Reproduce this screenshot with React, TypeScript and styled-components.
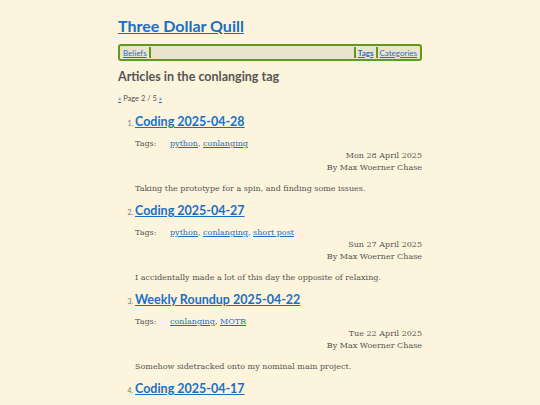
import React, { FC } from "react";
import styled, { createGlobalStyle } from "styled-components";

type Article = {
  title: string;
  tags: string[];
  date: string;
  summary: string;
};

const articles: Article[] = [
  {
    title: "Coding 2025-04-28",
    tags: ["python", "conlanging"],
    date: "Mon 28 April 2025",
    summary: "Taking the prototype for a spin, and finding some issues.",
  },
  {
    title: "Coding 2025-04-27",
    tags: ["python", "conlanging", "short post"],
    date: "Sun 27 April 2025",
    summary: "I accidentally made a lot of this day the opposite of relaxing.",
  },
  {
    title: "Weekly Roundup 2025-04-22",
    tags: ["conlanging", "MOTR"],
    date: "Tue 22 April 2025",
    summary: "Somehow sidetracked onto my nominal main project.",
  },
  {
    title: "Coding 2025-04-17",
    tags: ["python", "conlanging"],
    date: "Thu 17 April 2025",
    summary: "Getting things in order.",
  },
];

const App: FC = () => (
  <>
    <GlobalStyle />
    <Page>
      <SiteTitle>
        <a href="#">Three Dollar Quill</a>
      </SiteTitle>
      <Nav>
        <NavLink href="#">Beliefs</NavLink>
        <Sep />
        <Spacer />
        <Sep />
        <NavLink href="#" $active>
          Tags
        </NavLink>
        <Sep />
        <NavLink href="#">Categories</NavLink>
      </Nav>
      <Heading>Articles in the conlanging tag</Heading>
      <Pager>
        <a href="#">«</a> Page 2 / 5 <a href="#">»</a>
      </Pager>
      <List>
        {articles.map((a) => (
          <Item key={a.title}>
            <ItemTitle>
              <a href="#">{a.title}</a>
            </ItemTitle>
            <TagRow>
              <TagLabel>Tags:</TagLabel>
              <span>
                {a.tags.map((t, i) => (
                  <React.Fragment key={t}>
                    {i > 0 && ", "}
                    <TagLink href="#">{t}</TagLink>
                  </React.Fragment>
                ))}
              </span>
            </TagRow>
            <Meta>
              <div>{a.date}</div>
              <div>By Max Woerner Chase</div>
            </Meta>
            <Summary>{a.summary}</Summary>
          </Item>
        ))}
      </List>
    </Page>
  </>
);

export default App;

const GlobalStyle = createGlobalStyle`
  body {
    margin: 0;
    background: #fcf4dc;
    color: #555;
    font-family: "DejaVu Serif", serif;
  }
`;

const Page = styled.div`
  width: 304px;
  margin: 0 auto;
  padding-top: 15px;
`;

const SiteTitle = styled.h1`
  margin: 0;
  font-family: Lato, sans-serif;
  font-size: 16px;
  line-height: 22px;
  font-weight: 700;
  a {
    color: #1a6fc4;
    text-decoration: underline;
  }
`;

const Nav = styled.nav`
  display: flex;
  align-items: center;
  margin-top: 7px;
  height: 13px;
  padding: 0 2px;
  border: 2px solid #5f9a1e;
  border-radius: 3px;
  background: #ece3cc;
  font-family: Lato, sans-serif;
  font-size: 8px;
`;

const NavLink = styled.a<{ $active?: boolean }>`
  color: #2a72c0;
  font-weight: ${(p) => (p.$active ? 700 : 400)};
  text-decoration: underline;
  padding: 0 1px;
`;

const Sep = styled.span`
  width: 2px;
  height: 11px;
  background: #5f9a1e;
  margin: 0 1px;
`;

const Spacer = styled.span`
  flex: 1;
`;

const Heading = styled.h2`
  margin: 7px 0 0;
  font-family: Lato, sans-serif;
  font-size: 12.5px;
  line-height: 18px;
  font-weight: 700;
  color: #555;
`;

const Pager = styled.p`
  margin: 8px 0 0;
  font-family: Lato, sans-serif;
  font-size: 7.5px;
  line-height: 10px;
  color: #555;
  a {
    color: #1a6fc4;
  }
`;

const List = styled.ol`
  margin: 9px 0 0;
  padding-left: 17px;
  font-family: Lato, sans-serif;
  font-size: 7px;
  color: #777;
`;

const Item = styled.li`
  margin-bottom: 7px;
`;

const ItemTitle = styled.h3`
  display: inline;
  font-size: 12.5px;
  line-height: 18px;
  font-weight: 700;
  a {
    color: #1a6fc4;
    text-decoration: underline;
  }
`;

const TagRow = styled.div`
  display: flex;
  margin-top: 7px;
  font-family: "DejaVu Serif", serif;
  font-size: 8px;
  line-height: 11px;
  color: #555;
`;

const TagLabel = styled.span`
  width: 35px;
`;

const TagLink = styled.a`
  color: #1a6fc4;
  text-decoration: underline;
`;

const Meta = styled.div`
  margin-top: 1px;
  text-align: right;
  font-family: "DejaVu Serif", serif;
  font-size: 8px;
  line-height: 12px;
  color: #555;
`;

const Summary = styled.p`
  margin: 9px 0 0;
  font-family: "DejaVu Serif", serif;
  font-size: 8px;
  line-height: 12px;
  color: #555;
`;
